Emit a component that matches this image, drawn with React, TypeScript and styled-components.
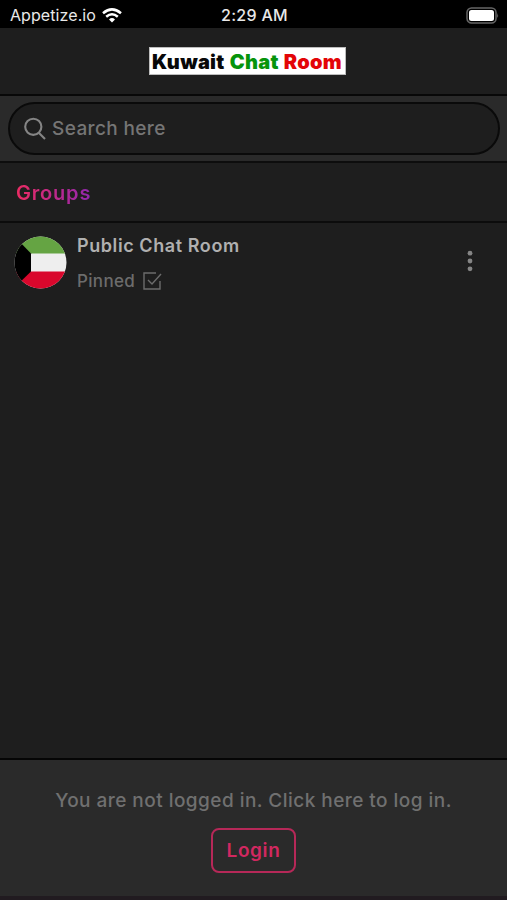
import React from "react";
import styled, { createGlobalStyle } from "styled-components";

const Global = createGlobalStyle`
  * { box-sizing: border-box; }
  body { margin: 0; background: #1e1e1e; font-family: Inter, "Open Sans", sans-serif; }
`;
const Screen = styled.main`
  width: 507px; height: 900px; display: flex; flex-direction: column;
  background: #1e1e1e; overflow: hidden; white-space: nowrap;
`;
const StatusBar = styled.div`
  height: 28px; flex: none; background: #000; color: #e9e9e9;
  display: grid; grid-template-columns: 1fr auto 1fr; align-items: center; padding: 2px 8px 0 10px;
`;
const Carrier = styled.div`display: flex; align-items: center; gap: 6px;`;
const Label = styled.span<{ $size: number; $weight?: number; $color?: string; $spacing?: number }>`
  font-size: ${p => p.$size}px; line-height: 24px; font-weight: ${p => p.$weight ?? 400};
  color: ${p => p.$color ?? "inherit"}; letter-spacing: ${p => p.$spacing ?? 0}px;
`;
const BatterySlot = styled.div`display: flex; justify-content: flex-end;`;
const Header = styled.header`
  height: 68px; flex: none; border-bottom: 2px solid #080808;
  display: flex; justify-content: center; padding: 19px 13px 0 0;
`;
const Logo = styled.h1`
  margin: 0; width: 197px; height: 28px; background: #fff; border: 1px solid #bdbdbd;
  display: flex; align-items: center; justify-content: center; gap: 5px; padding-top: 1px;
  font: 900 20px/26px Inter, sans-serif; letter-spacing: 0.3px;
`;
const Word = styled.span<{ $color: string }>`color: ${p => p.$color};`;
const SearchBar = styled.div`
  height: 67px; flex: none; background: #2a2a2a; border-bottom: 2px solid #0d0d0d; padding: 6px 7px 0 8px;
`;
const SearchField = styled.div`
  height: 53px; border: 2px solid #0a0a0a; border-radius: 27px; background: #1e1e1e;
  display: flex; align-items: center; gap: 6px; padding-left: 14px;
`;
const Section = styled.div`
  height: 60px; flex: none; border-bottom: 2px solid #0c0c0c; padding: 18px 16px 0;
`;
const SectionTitle = styled.h2`
  margin: 0; width: fit-content; font-size: 20px; line-height: 25px; font-weight: 600; letter-spacing: 0.8px;
  color: transparent; background: linear-gradient(90deg, #ec2b63, #9127b0); background-clip: text;
`;
const Rooms = styled.section`flex: 1;`;
const Room = styled.article`
  height: 78px; display: flex; align-items: center; padding: 0 34px 0 14px; gap: 10px;
`;
const RoomText = styled.div`display: flex; flex-direction: column; gap: 11px; flex: 1; padding-top: 3px;`;
const Pinned = styled.div`display: flex; align-items: center; gap: 8px; color: #6c6c6c;`;
const MenuDots = styled.svg`margin-bottom: 2px;`;
const Footer = styled.footer`
  height: 142px; flex: none; background: #2a2a2a; border-top: 2px solid #050505; border-bottom: 4px solid #211b20;
  display: flex; flex-direction: column; align-items: center; padding-top: 29px; gap: 15px;
`;
const LoginButton = styled.button`
  width: 85px; height: 45px; border: 2px solid #b62858; border-radius: 8px; background: transparent;
  padding: 0; color: #d22860; font: 600 19px/24px Inter, sans-serif; letter-spacing: 0.6px;
`;

export default function App() {
  return (
    <>
      <Global />
      <Screen>
        <StatusBar>
          <Carrier>
            <Label $size={16} $spacing={0.08}>Appetize.io</Label>
            <svg width="20" height="15" viewBox="0 0 20 15" fill="none" stroke="#fff" strokeWidth="2.5">
              <path d="M1 5.2Q10-2.5 19 5.2M4.2 8.8q5.8-5 11.6 0" />
              <path d="M7 11.4q3-2.6 6 0l-3 3z" fill="#fff" stroke="none" />
            </svg>
          </Carrier>
          <Label $size={16} $weight={500} $spacing={0.3}>2:29 AM</Label>
          <BatterySlot>
            <svg width="33" height="17" viewBox="0 0 33 17">
              <rect x="1" y="1" width="29" height="15" rx="4.5" fill="none" stroke="#666" strokeWidth="1.5" />
              <rect x="3" y="3" width="25" height="11" rx="2.5" fill="#fff" />
              <path d="M31.3 6q1.5 2.5 0 5z" fill="#777" />
            </svg>
          </BatterySlot>
        </StatusBar>
        <Header>
          <Logo><Word $color="#080808">Kuwait</Word><Word $color="#06940c">Chat</Word><Word $color="#e30507">Room</Word></Logo>
        </Header>
        <SearchBar>
          <SearchField>
            <svg width="22" height="23" viewBox="0 0 22 23" fill="none" stroke="#858585" strokeWidth="2.1">
              <circle cx="9.3" cy="9.8" r="8.1" /><path d="m15 16 6 6" />
            </svg>
            <Label $size={19} $weight={500} $color="#757575" $spacing={0.38}>Search here</Label>
          </SearchField>
        </SearchBar>
        <Section><SectionTitle>Groups</SectionTitle></Section>
        <Rooms>
          <Room>
            <svg width="53" height="53" viewBox="0 0 53 53">
              <defs><clipPath id="avatar"><circle cx="26.5" cy="26.5" r="26" /></clipPath></defs>
              <g clipPath="url(#avatar)">
                <path fill="#eee" d="M0 0h53v53H0z" /><path fill="#65a443" d="M0 0h53v17.5H0z" />
                <path fill="#d9072c" d="M0 35.5h53V53H0z" /><path d="M0 0 17 17.5v18L0 52z" />
              </g>
            </svg>
            <RoomText>
              <Label $size={18} $weight={600} $color="#b0b0b0" $spacing={0.58}>Public Chat Room</Label>
              <Pinned>
                <Label $size={17} $weight={500} $spacing={0.33}>Pinned</Label>
                <svg width="19" height="18" viewBox="0 0 19 18" fill="none" stroke="currentColor" strokeWidth="1.4">
                  <path d="M13 1H1v16h16V9M5 8l4 4 9-10" />
                </svg>
              </Pinned>
            </RoomText>
            <MenuDots width="6" height="22" viewBox="0 0 6 22" fill="#858585">
              <circle cx="3" cy="3.2" r="2.4" /><circle cx="3" cy="11" r="2.4" /><circle cx="3" cy="18.8" r="2.4" />
            </MenuDots>
          </Room>
        </Rooms>
        <Footer>
          <Label $size={19} $weight={500} $color="#707070" $spacing={0.46}>You are not logged in. Click here to log in.</Label>
          <LoginButton>Login</LoginButton>
        </Footer>
      </Screen>
    </>
  );
}
